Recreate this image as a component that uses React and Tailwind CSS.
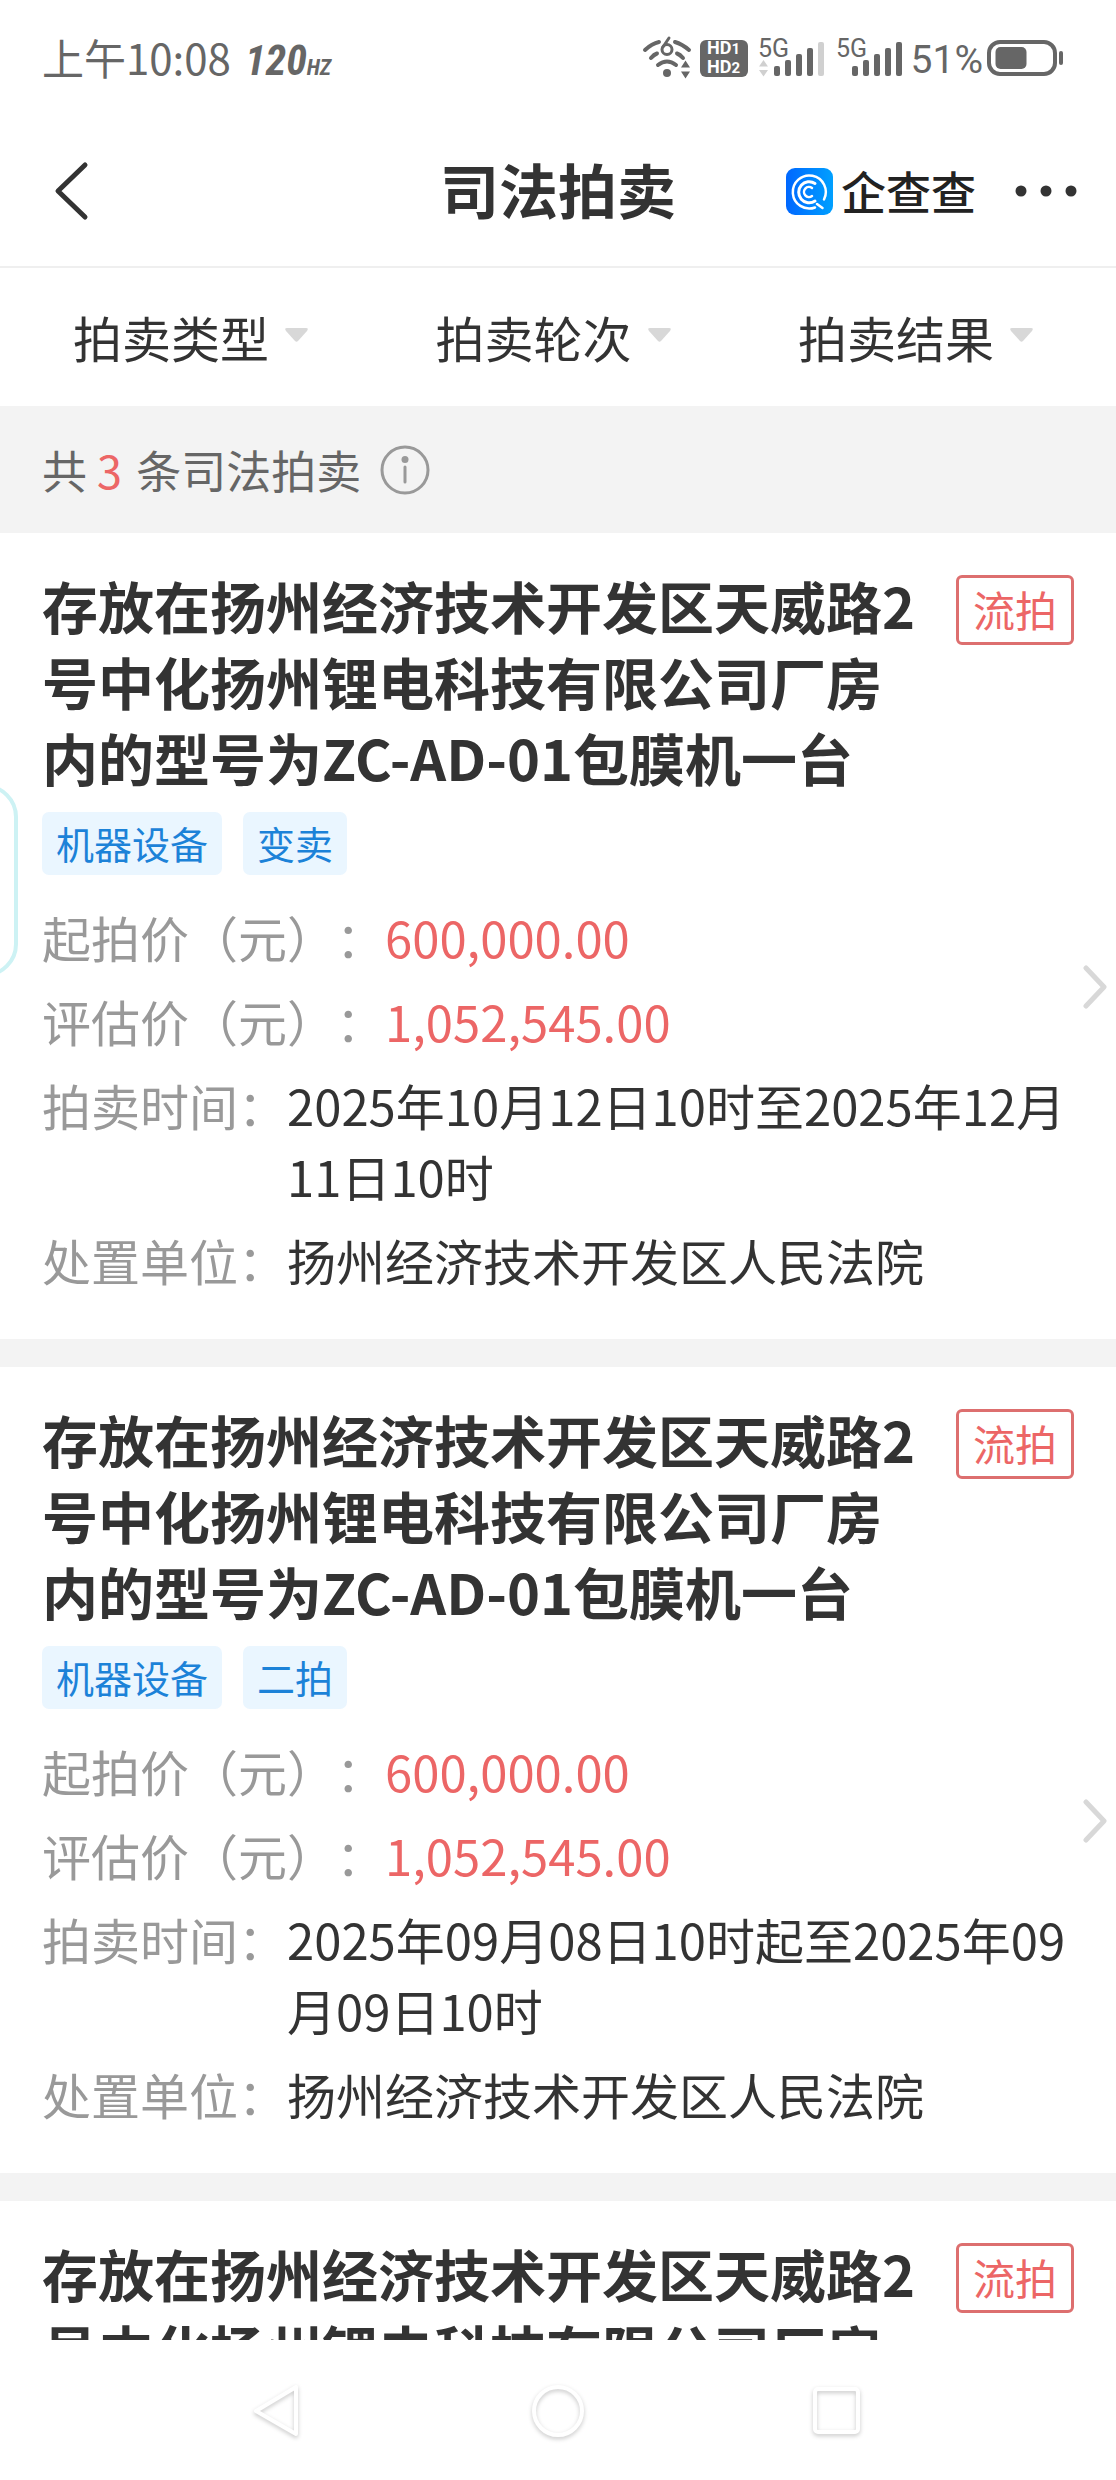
import React from 'react';

const TITLE = '存放在扬州经济技术开发区天威路2号中化扬州锂电科技有限公司厂房内的型号为ZC-AD-01包膜机一台';

const auctions = [
  {
    id: 1,
    title: TITLE,
    result: '流拍',
    tags: ['机器设备', '变卖'],
    startPrice: '600,000.00',
    evalPrice: '1,052,545.00',
    time: '2025年10月12日10时至2025年12月11日10时',
    court: '扬州经济技术开发区人民法院',
  },
  {
    id: 2,
    title: TITLE,
    result: '流拍',
    tags: ['机器设备', '二拍'],
    startPrice: '600,000.00',
    evalPrice: '1,052,545.00',
    time: '2025年09月08日10时起至2025年09月09日10时',
    court: '扬州经济技术开发区人民法院',
  },
  {
    id: 3,
    title: TITLE,
    result: '流拍',
  },
];

const filters = ['拍卖类型', '拍卖轮次', '拍卖结果'];

const WifiIcon = () => (
  <svg width="50" height="56" viewBox="0 -6 50 56" fill="none" stroke="#666" strokeWidth="4" strokeLinecap="round">
    <path d="M3 14Q10 7.500 17 6" />
    <path d="M33 6Q40 8 47 14" />
    <path d="M9 22Q12 18.500 15 17.500" />
    <path d="M35 17.500Q38 18.500 41 22" />
    <path d="M16 29Q25 22 34 29" />
    <circle cx="25" cy="37" r="4" fill="#666" stroke="none" />
    <path d="M27 2L21 11" strokeWidth="3" />
    <circle cx="25" cy="13.500" r="5" strokeWidth="3" />
    <path d="M39 31.500L43.500 24.500L48 31.500ZM39 35.500L43.500 42.500L48 35.500Z" fill="#666" stroke="none" />
  </svg>
);

const SignalIcon = ({ weak }) => (
  <svg width="70" height="56" viewBox="0 -6 70 56" fill="#666">
    <text x="0" y="21" fontSize="25" fontFamily="Roboto, sans-serif">5G</text>
    {weak && <path d="M1 30.500L5.500 24L10 30.500ZM1 34L5.500 40.500L10 34Z" fill="#d0d0d0" />}
    <rect x="16" y="30" width="6" height="10" rx="2" />
    <rect x="27" y="24" width="6" height="16" rx="2" />
    <rect x="38" y="18" width="6" height="22" rx="2" />
    <rect x="49" y="12" width="6" height="28" rx="2" />
    <rect x="60" y="6" width="6" height="34" rx="2" fill={weak ? '#d0d0d0' : '#666'} />
  </svg>
);

const BatteryIcon = () => (
  <svg width="78" height="38" viewBox="0 0 78 38">
    <rect x="3" y="3" width="66" height="32" rx="11" fill="none" stroke="#666" strokeWidth="4" />
    <rect x="9.500" y="8" width="31" height="22" rx="5" fill="#666" />
    <rect x="73" y="12" width="4" height="14" rx="2" fill="#666" />
  </svg>
);

const StatusBar = () => (
  <div className="flex h-[116px] shrink-0 items-center justify-between pl-[42px] pr-[52px] text-[#666]">
    <div className="flex items-baseline pt-2">
      <span className="text-[42px] leading-[60px]">上午10:08</span>
      <span className="ml-[14px] font-['Roboto_Condensed',Roboto,sans-serif] text-[42px] font-bold italic leading-[60px]">
        120<span className="text-[22px]">HZ</span>
      </span>
    </div>
    <div className="flex items-center">
      <WifiIcon />
      <div className="ml-2 mr-[10px] flex h-[37px] w-12 flex-col items-center justify-center rounded-md bg-[#666] font-[Roboto,sans-serif] text-[18px] font-bold leading-[17px] text-white">
        <span>HD<span className="text-[15px]">1</span></span>
        <span>HD<span className="text-[15px]">2</span></span>
      </div>
      <SignalIcon weak />
      <span className="w-2" />
      <SignalIcon />
      <span className="ml-[5px] pt-1 font-[Roboto,sans-serif] text-[39px] leading-[48px]">51%</span>
      <span className="w-[3px]" />
      <BatteryIcon />
    </div>
  </div>
);

const Header = () => (
  <header className="grid h-[152px] shrink-0 grid-cols-[1fr_auto_1fr] items-center border-b-2 border-[#efefef] px-[38px]">
    <button type="button" aria-label="返回" className="ml-3 justify-self-start">
      <svg width="44" height="64" viewBox="0 0 44 64" fill="none" stroke="#333" strokeWidth="5" strokeLinecap="round" strokeLinejoin="round">
        <path d="M35 6L8 32L35 58" />
      </svg>
    </button>
    <h1 className="pb-1 text-[59px] font-bold leading-[80px]">司法拍卖</h1>
    <div className="flex items-center justify-self-end">
      <svg width="47" height="47" viewBox="0 0 47 47" fill="none" stroke="#fff" strokeLinecap="round">
        <defs>
          <linearGradient id="logo" x1="0" y1="0" x2="1" y2="0">
            <stop offset="0" stopColor="#0067ff" />
            <stop offset="1" stopColor="#00a0ff" />
          </linearGradient>
        </defs>
        <rect width="47" height="47" rx="9" fill="url(#logo)" stroke="none" />
        <path d="M29 39.500A16.500 16.500 0 1 1 38 31.500M31 36L36.500 40" strokeWidth="2.500" />
        <path d="M29 15.500A10.500 10.500 0 1 0 29 33" strokeWidth="3" />
        <path d="M26 20A5 5 0 1 0 26 28" strokeWidth="2.500" />
      </svg>
      <span className="ml-2 text-[45px] font-medium leading-[60px] text-[#222]">企查查</span>
      <button type="button" aria-label="更多" className="ml-[38px]">
        <svg width="64" height="40" viewBox="0 0 64 40" fill="#333">
          <circle cx="7" cy="20" r="5.500" />
          <circle cx="32" cy="20" r="5.500" />
          <circle cx="57" cy="20" r="5.500" />
        </svg>
      </button>
    </div>
  </header>
);

const FilterBar = () => (
  <div className="flex h-[138px] shrink-0 items-center justify-between pl-[73px] pr-[83px]">
    {filters.map((name) => (
      <label key={name} className="flex items-center">
        <select aria-label={name} className="appearance-none bg-transparent text-[49px] leading-[72px]">
          <option>{name}</option>
        </select>
        <svg className="pointer-events-none mb-1 ml-[15px]" width="23" height="14" viewBox="0 0 23 14" fill="#d8d8d8">
          <path d="M2 0H21Q24 0 22 3L13 13Q11.500 14.500 10 13L1 3Q-1 0 2 0Z" />
        </svg>
      </label>
    ))}
  </div>
);

const Row = ({ label, children }) => (
  <div className="flex">
    <dt className="shrink-0 text-[#999] [text-spacing-trim:space-all]">{label}</dt>
    {children}
  </div>
);

const AuctionDetail = ({ item }) => (
  <>
    <div className="mt-[17px] flex gap-[21px]">
      {item.tags.map((tag) => (
        <span key={tag} className="rounded-[7px] bg-[#eaf6ff] px-[14px] pb-[2px] text-[38px] leading-[61px] text-[#1c82d8]">
          {tag}
        </span>
      ))}
    </div>

    <div className="mt-[26px] flex items-start pr-2">
      <dl className="flex flex-1 flex-col gap-[13px] text-[49px] leading-[71px]">
        <Row label="起拍价（元）：">
          <dd className="text-[#ec6666]">{item.startPrice}</dd>
        </Row>
        <Row label="评估价（元）：">
          <dd className="text-[#ec6666]">{item.evalPrice}</dd>
        </Row>
        <Row label="拍卖时间：">
          <dd className="flex-1">{item.time}</dd>
        </Row>
        <Row label="处置单位：">
          <dd className="flex-1">{item.court}</dd>
        </Row>
      </dl>
      <a href="#detail" aria-label="查看详情" className="ml-2 mt-16">
        <svg width="26" height="44" viewBox="0 0 26 44" fill="none" stroke="#d8d8d8" strokeWidth="5" strokeLinecap="round" strokeLinejoin="round">
          <path d="M4 3L22 22L4 41" />
        </svg>
      </a>
    </div>
  </>
);

const AuctionCard = ({ item }) => (
  <article className="bg-white pb-11 pl-[42px] pt-[34px]">
    <div className="flex items-start gap-[34px] pr-[42px]">
      <h2 className="flex-1 text-[56px] font-bold leading-[76px]">{item.title}</h2>
      <span className="mt-2 rounded-md border-3 border-[#dd6f6f] px-[14px] pb-[2px] text-[42px] leading-[62px] text-[#ec6666]">
        {item.result}
      </span>
    </div>
    {item.tags && <AuctionDetail item={item} />}
  </article>
);

const NavBar = () => (
  <nav className="flex h-[140px] shrink-0 items-center justify-center gap-[220px] bg-white pt-[2px]">
    <button type="button" aria-label="返回">
      <svg className="drop-shadow-[0_2px_2px_rgba(0,0,0,0.22)]" width="60" height="60" viewBox="0 0 60 60" fill="none" stroke="#fff" strokeWidth="4" strokeLinejoin="round">
        <path d="M48 6V53L8 30Z" />
      </svg>
    </button>
    <button type="button" aria-label="主页">
      <svg className="drop-shadow-[0_2px_2px_rgba(0,0,0,0.22)]" width="60" height="60" viewBox="0 0 60 60" fill="none" stroke="#fff" strokeWidth="4">
        <circle cx="30" cy="30" r="24" />
      </svg>
    </button>
    <button type="button" aria-label="最近任务">
      <svg className="drop-shadow-[0_2px_2px_rgba(0,0,0,0.22)]" width="60" height="60" viewBox="0 0 60 60" fill="none" stroke="#fff" strokeWidth="4">
        <rect x="7" y="8" width="43" height="43" rx="3" />
      </svg>
    </button>
  </nav>
);

const App = () => {
  return (
    <div
      lang="zh-CN"
      className="relative flex h-screen flex-col overflow-hidden bg-white font-['Noto_Sans_CJK_SC',sans-serif] text-[#333]"
    >
      <StatusBar />
      <Header />
      <FilterBar />

      {/* Result count */}
      <div className="flex h-[127px] shrink-0 items-center bg-[#f3f3f3] pl-[42px] text-[45px] leading-[66px] text-[#666]">
        <p>
          共 <span className="mr-1 text-[#ec6666]">3</span> 条司法拍卖
        </p>
        <button type="button" aria-label="说明" className="ml-[19px]">
          <svg width="50" height="50" viewBox="0 0 50 50" fill="none" stroke="#999" strokeWidth="3" strokeLinecap="round">
            <circle cx="25" cy="25" r="23" />
            <path d="M25 22V37" />
            <circle cx="25" cy="14.500" r="3.500" fill="#999" stroke="none" />
          </svg>
        </button>
      </div>

      {/* Auction list */}
      <main className="flex min-h-0 flex-1 flex-col gap-7 overflow-hidden bg-[#f3f3f3]">
        {auctions.map((item) => (
          <AuctionCard key={item.id} item={item} />
        ))}
      </main>

      <NavBar />

      {/* Floating edge handle */}
      <div className="absolute -left-12 top-[784px] h-[193px] w-[66px] rounded-[34px] border-4 border-[#cdf2f4] bg-white" />
    </div>
  );
};

export default App;
